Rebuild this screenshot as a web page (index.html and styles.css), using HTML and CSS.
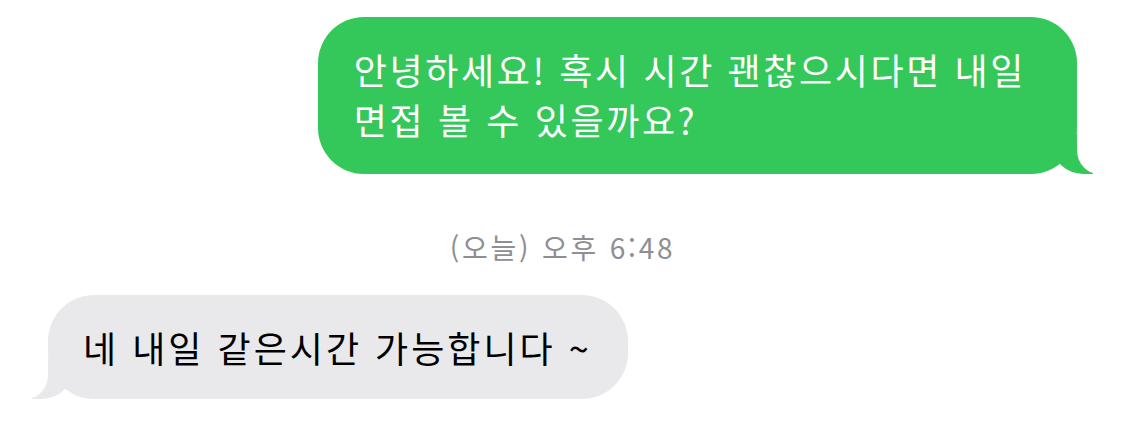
FILE: index.html
```html
<!DOCTYPE html>
<html lang="ko">
<head>
    <meta charset="UTF-8">
    <meta name="viewport" content="width=device-width, initial-scale=1.0">
    <title>메시지</title>
    <link rel="stylesheet" href="styles.css">
</head>
<body>
    <main class="chat">
        <!-- 보낸 메시지 -->
        <div class="row row-sent">
            <p class="bubble sent">안녕하세요! 혹시 시간 괜찮으시다면 내일<br>면접 볼 수 있을까요?</p>
        </div>

        <!-- 시간 -->
        <p class="time">(오늘) 오후 6:48</p>

        <!-- 받은 메시지 -->
        <div class="row row-received">
            <p class="bubble received">네 내일 같은시간 가능합니다 ~</p>
        </div>
    </main>
</body>
</html>
```

FILE: styles.css
```css
/* Estilos generales */
body {
    margin: 0;
    background-color: #ffffff;
    font-family: "Noto Sans CJK KR", "Noto Sans", sans-serif;
}

.chat {
    display: flex;
    flex-direction: column;
    padding: 17px 48px 0 48px;
}

.row {
    display: flex;
}

.row-sent {
    justify-content: flex-end;
}

.row-received {
    justify-content: flex-start;
}

/* Burbujas */
.bubble {
    position: relative;
    margin: 0;
    padding: 27px 51px 30px 36px;
    font-size: 36px;
    line-height: 50px;
    letter-spacing: 2.6px;
    white-space: nowrap;
    border-radius: 46px;
}

.sent {
    background-color: #34c759;
    color: #ffffff;
}

.received {
    background-color: #e9e9eb;
    color: #000000;
    padding: 27px 36px 27px 35px;
    letter-spacing: 3px;
}

/* Colas de las burbujas */
.sent::before {
    content: "";
    position: absolute;
    right: -16px;
    bottom: 0;
    width: 40px;
    height: 40px;
    background-color: #34c759;
    border-bottom-left-radius: 30px 28px;
}

.sent::after {
    content: "";
    position: absolute;
    right: -40px;
    bottom: 0;
    width: 40px;
    height: 46px;
    background-color: #ffffff;
    border-bottom-left-radius: 22px 24px;
}

.received::before {
    content: "";
    position: absolute;
    left: -16px;
    bottom: 0;
    width: 40px;
    height: 40px;
    background-color: #e9e9eb;
    border-bottom-right-radius: 30px 28px;
}

.received::after {
    content: "";
    position: absolute;
    left: -40px;
    bottom: 0;
    width: 40px;
    height: 46px;
    background-color: #ffffff;
    border-bottom-right-radius: 22px 24px;
}

/* Hora */
.time {
    margin: 55px 0 30px 0;
    text-align: center;
    color: #8e8e93;
    font-size: 28px;
    line-height: 36px;
    letter-spacing: 2.8px;
}
```
